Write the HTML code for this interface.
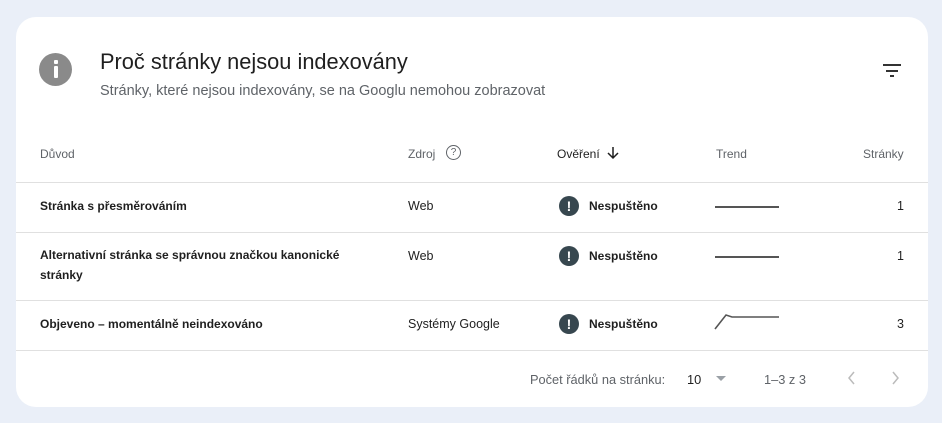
<!DOCTYPE html>
<html><head><meta charset="utf-8"><style>
body{margin:0;width:942px;height:423px;background:#eaeff8;font-family:"Liberation Sans",sans-serif;position:relative;overflow:hidden}
.card{position:absolute;left:16px;top:17px;width:912px;height:390px;background:#fff;border-radius:20px}
.a{position:absolute;white-space:nowrap}
.line{position:absolute;left:16px;width:912px;height:1px;background:#e0e0e0}
.h{font-size:12px;color:#5f6368}
.r{font-size:12.5px;color:#1f1f1f}
.b{font-size:12px;font-weight:bold;color:#1f1f1f}
.ic{position:absolute;width:20px;height:20px;border-radius:50%;background:#37474f;color:#fff;font-weight:bold;font-size:14px;text-align:center;line-height:20px}
</style></head><body>
<div class="card"></div>
<div class="a" style="left:39px;top:53px;width:33px;height:33px;border-radius:50%;background:#8a8a8a"></div>
<div class="a" style="left:54px;top:60px;width:4px;height:4px;background:#fff;border-radius:1px"></div>
<div class="a" style="left:54px;top:66px;width:4px;height:12px;background:#fff;border-radius:1px"></div>
<div class="a" style="left:100px;top:49px;font-size:21.8px;color:#1f1f1f">Proč stránky nejsou indexovány</div>
<div class="a" style="left:100px;top:83px;font-size:14.5px;color:#5f6368">Stránky, které nejsou indexovány, se na Googlu nemohou zobrazovat</div>
<div class="a" style="left:883px;top:64px;width:18px;height:2px;background:#333"></div>
<div class="a" style="left:886px;top:70px;width:12px;height:2px;background:#333"></div>
<div class="a" style="left:890px;top:75px;width:4px;height:2px;background:#333"></div>

<div class="a h" style="left:40px;top:147px">Důvod</div>
<div class="a h" style="left:408px;top:147px">Zdroj</div>
<div class="a" style="left:446px;top:145px;width:13px;height:13px;border:1.5px solid #5f6368;border-radius:50%;font-size:10px;text-align:center;line-height:13px;color:#5f6368">?</div>
<div class="a h" style="left:557px;top:147px;color:#1f1f1f">Ověření</div>
<svg class="a" style="left:606px;top:146px" width="14" height="14"><path d="M7 1v11M2 7l5 5 5-5" fill="none" stroke="#1f1f1f" stroke-width="1.5"/></svg>
<div class="a h" style="left:716px;top:147px">Trend</div>
<div class="a h" style="left:863px;top:147px">Stránky</div>
<div class="line" style="top:182px"></div>

<div class="a b" style="left:40px;top:199px">Stránka s přesměrováním</div>
<div class="a r" style="left:408px;top:199px">Web</div>
<div class="ic" style="left:559px;top:196px">!</div>
<div class="a b" style="left:589px;top:199px">Nespuštěno</div>
<div class="a" style="left:715px;top:206px;width:64px;height:2px;background:#555"></div>
<div class="a r" style="left:897px;top:199px">1</div>
<div class="line" style="top:232px"></div>

<div class="a b" style="left:40px;line-height:20px;top:245px">Alternativní stránka se správnou značkou kanonické<br>stránky</div>
<div class="a r" style="left:408px;top:249px">Web</div>
<div class="ic" style="left:559px;top:246px">!</div>
<div class="a b" style="left:589px;top:249px">Nespuštěno</div>
<div class="a" style="left:715px;top:256px;width:64px;height:2px;background:#555"></div>
<div class="a r" style="left:897px;top:249px">1</div>
<div class="line" style="top:300px"></div>

<div class="a b" style="left:40px;top:317px">Objeveno – momentálně neindexováno</div>
<div class="a r" style="left:408px;top:317px">Systémy Google</div>
<div class="ic" style="left:559px;top:314px">!</div>
<div class="a b" style="left:589px;top:317px">Nespuštěno</div>
<svg class="a" style="left:714px;top:312px" width="68" height="20"><polyline points="1,17 12,3 18,5 65,5" fill="none" stroke="#555" stroke-width="1.6"/></svg>
<div class="a r" style="left:897px;top:317px">3</div>
<div class="line" style="top:350px"></div>

<div class="a" style="left:530px;top:372px;font-size:12.8px;color:#5f6368">Počet řádků na stránku:</div>
<div class="a" style="left:687px;top:372px;font-size:12.8px;color:#1f1f1f">10</div>
<div class="a" style="left:716px;top:376px;width:0;height:0;border-left:5px solid transparent;border-right:5px solid transparent;border-top:5px solid #9aa0a6"></div>
<div class="a" style="left:764px;top:372px;font-size:12.8px;color:#5f6368">1–3 z 3</div>
<svg class="a" style="left:846px;top:370px" width="12" height="16"><polyline points="8,2 3,8 8,14" fill="none" stroke="#bbb" stroke-width="1.5"/></svg>
<svg class="a" style="left:890px;top:370px" width="12" height="16"><polyline points="3,2 8,8 3,14" fill="none" stroke="#bbb" stroke-width="1.5"/></svg>
</body></html>
